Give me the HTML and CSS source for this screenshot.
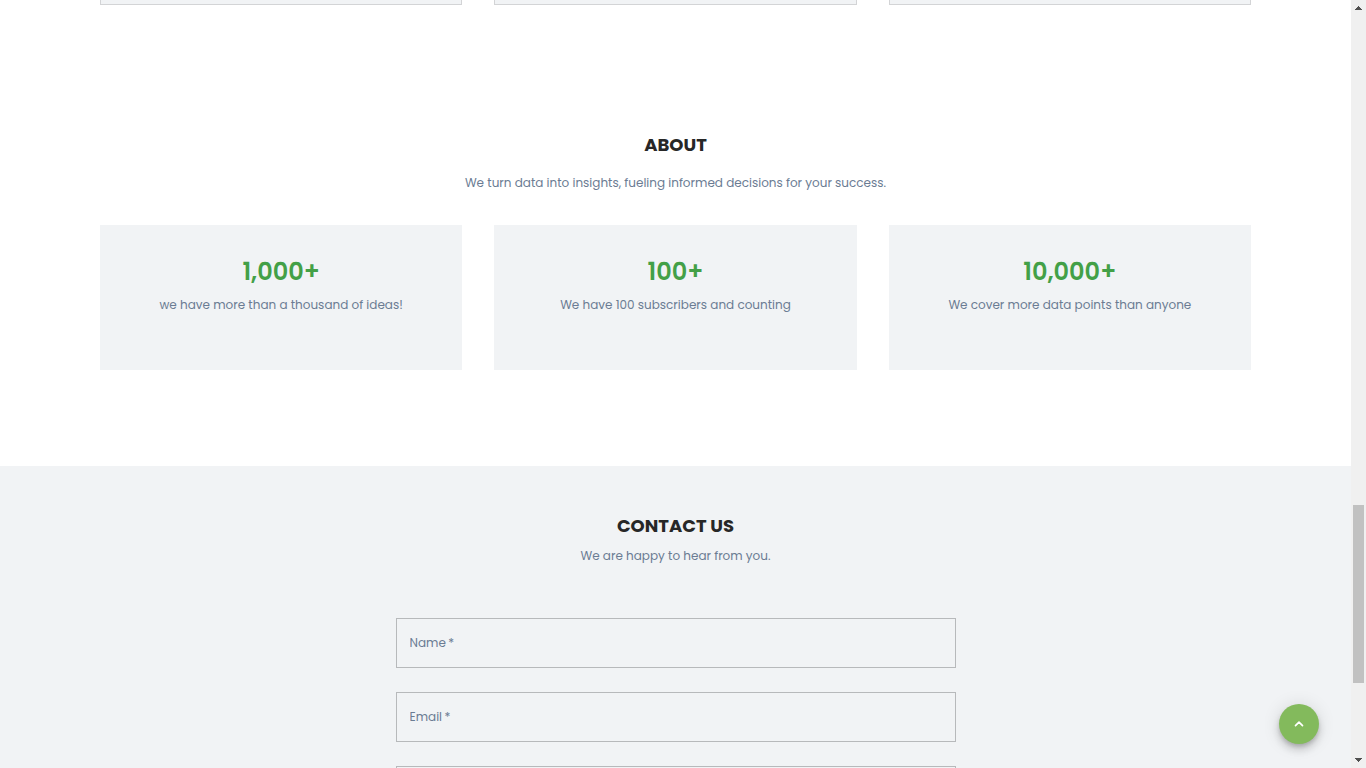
FILE: index.html
```html
<!DOCTYPE html>
<html lang="en">
<head>
<meta charset="utf-8">
<meta name="viewport" content="width=device-width, initial-scale=1">
<title>About and contact</title>
<link rel="stylesheet" href="styles.css">
</head>
<body>
<div class="viewport">
  <main class="content">
    <div class="cards-end" aria-hidden="true">
      <div class="card-end"></div>
      <div class="card-end"></div>
      <div class="card-end"></div>
    </div>

    <section class="about" id="about">
      <h2 class="title">ABOUT</h2>
      <p class="text about-lead">We turn data into insights, fueling informed decisions for your success.</p>
      <div class="stats">
        <article class="stat">
          <h3 class="stat-value">1,000+</h3>
          <p class="text">we have more than a thousand of ideas!</p>
        </article>
        <article class="stat">
          <h3 class="stat-value">100+</h3>
          <p class="text">We have 100 subscribers and counting</p>
        </article>
        <article class="stat">
          <h3 class="stat-value">10,000+</h3>
          <p class="text">We cover more data points than anyone</p>
        </article>
      </div>
    </section>

    <section class="contact" id="contact">
      <h2 class="title">CONTACT US</h2>
      <p class="text contact-lead">We are happy to hear from you.</p>
      <form class="form">
        <input class="field" type="text" name="name" placeholder="Name&thinsp;*" aria-label="Name" required>
        <input class="field" type="email" name="email" placeholder="Email&thinsp;*" aria-label="Email" required>
        <input class="field" type="text" name="subject" aria-label="Subject">
      </form>
    </section>
  </main>

  <div class="scrollbar" aria-hidden="true">
    <svg class="scroll-arrow" viewBox="0 0 15 17" shape-rendering="crispEdges"><path fill="#505050" d="M7 6h1v1h1v1h1v1h1v1H4V9h1V8h1V7h1z"/></svg>
    <div class="track"><div class="thumb"></div></div>
    <svg class="scroll-arrow" viewBox="0 0 15 17" shape-rendering="crispEdges"><path fill="#505050" d="M4 7h7v1h-1v1H9v1H8v1H7v-1H6V9H5V8H4z"/></svg>
  </div>
</div>

<button class="to-top" type="button" aria-label="Scroll back to top">
  <svg class="to-top-icon" viewBox="0 0 16 16"><path fill="none" stroke="#fff" stroke-width="1.7" stroke-linecap="round" stroke-linejoin="round" d="M4.5 9.6L8 6.1l3.5 3.5"/></svg>
</button>
</body>
</html>
```
FILE: styles.css
```css
* {
  box-sizing: border-box;
}

body {
  margin: 0;
  font-family: Poppins, Inter, "Open Sans", sans-serif;
  color: #272727;
  background: #fff;
}

.viewport {
  display: grid;
  grid-template-columns: minmax(0, 1fr) 15px;
  height: 100vh;
  overflow: hidden;
}

.content {
  display: flex;
  flex-direction: column;
  min-height: 0;
  overflow: hidden;
}

.content > * {
  flex-shrink: 0;
}

.cards-end,
.stats {
  display: grid;
  grid-template-columns: repeat(3, minmax(0, 1fr));
  gap: 32px;
}

.cards-end {
  padding: 0 100px;
}

.card-end {
  height: 5px;
  background: #f1f3f5;
  border: 1px solid #d3d4d6;
  border-top: 0;
}

.about {
  padding: 128px 100px 96px;
  text-align: center;
}

.title {
  margin: 0;
  font-size: 18px;
  line-height: 24px;
  font-weight: 700;
}

.text {
  margin: 0;
  font-size: 12px;
  line-height: 20px;
  color: #6b7c93;
}

.about-lead {
  margin: 16px 0 32px;
}

.stat {
  min-height: 145px;
  padding: 32px 24px;
  background: #f1f3f5;
}

.stat-value {
  margin: 0 0 8px;
  font-size: 24px;
  line-height: 30px;
  font-weight: 600;
  color: #43a047;
}

.contact {
  padding: 48px 24px;
  text-align: center;
  background: #f1f3f5;
}

.contact-lead {
  margin: 8px 0 52px;
}

.form {
  display: grid;
  gap: 24px;
  max-width: 560px;
  margin: 0 auto;
}

.field {
  width: 100%;
  height: 50px;
  padding: 0 13px;
  font: inherit;
  font-size: 12px;
  color: #272727;
  background: transparent;
  border: 1px solid #b7b9bb;
  border-radius: 0;
}

.field::placeholder {
  color: #6b7c93;
  opacity: 1;
}

.scrollbar {
  display: flex;
  flex-direction: column;
  background: #f0f0f0;
}

.scroll-arrow {
  display: block;
  width: 15px;
  height: 17px;
}

.track {
  display: grid;
  grid-template-rows: 488fr 178fr 68fr;
  flex: 1;
  padding: 0 2px;
}

.thumb {
  grid-row: 2;
  background: #c1c1c1;
}

.to-top {
  position: fixed;
  right: 47px;
  bottom: 24px;
  display: grid;
  place-items: center;
  width: 40px;
  height: 40px;
  padding: 0;
  background: #83ba5c;
  border: 0;
  border-radius: 50%;
  box-shadow: 0 3px 5px -1px rgba(0, 0, 0, 0.2), 0 6px 10px rgba(0, 0, 0, 0.14), 0 1px 18px rgba(0, 0, 0, 0.12);
  cursor: pointer;
}

.to-top-icon {
  width: 16px;
  height: 16px;
}
```
